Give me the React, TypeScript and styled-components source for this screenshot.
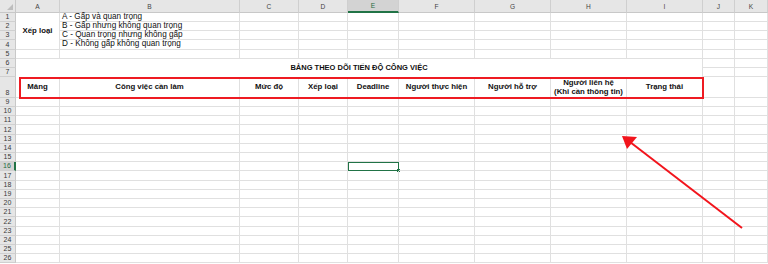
import styled, { createGlobalStyle } from "styled-components";

const GlobalStyle = createGlobalStyle`
  html, body {
    margin: 0;
    padding: 0;
    background: #ffffff;
  }
  body {
    font-family: "Liberation Sans", Arial, sans-serif;
    color: #000;
  }
`;

const COL_WIDTHS = [16, 44, 180, 59, 49, 51, 76, 76, 76, 76, 32, 33];
const LETTERS = ["A", "B", "C", "D", "E", "F", "G", "H", "I", "J", "K"];
const ROW_COUNT = 26;

const LEGEND = [
  "A - Gấp và quan trọng",
  "B - Gấp nhưng không quan trọng",
  "C - Quan trọng nhưng không gấp",
  "D - Không gấp không quan trọng",
];

const HEADERS = [
  "Mảng",
  "Công việc cần làm",
  "Mức độ",
  "Xếp loại",
  "Deadline",
  "Người thực hiện",
  "Người hỗ trợ",
  "Người liên hệ\n(Khi cần thông tin)",
  "Trạng thái",
];

type CellProps = {
  $col: number;
  $row: number;
  $colSpan?: number;
  $rowSpan?: number;
  $bold?: boolean;
  $align?: "left" | "center";
  $selected?: boolean;
};

export default function App() {
  const cells: JSX.Element[] = [];

  for (let r = 1; r <= ROW_COUNT; r++) {
    for (let c = 0; c < LETTERS.length; c++) {
      const key = `${LETTERS[c]}${r}`;
      // merged A1:A4
      if (c === 0 && r >= 2 && r <= 4) continue;
      if (c === 0 && r === 1) {
        cells.push(
          <Cell key={key} $col={c} $row={r} $rowSpan={4} $bold $align="center">
            Xếp loại
          </Cell>
        );
        continue;
      }
      // merged A6:I7 title
      if (r === 7 && c <= 8) continue;
      if (r === 6 && c > 0 && c <= 8) continue;
      if (r === 6 && c === 0) {
        cells.push(
          <Title key={key} $col={0} $row={6} $colSpan={9} $rowSpan={2}>
            BẢNG THEO DÕI TIẾN ĐỘ CÔNG VIỆC
          </Title>
        );
        continue;
      }
      if (r === 8 && c <= 8) {
        cells.push(
          <Cell key={key} $col={c} $row={r} $bold $align="center">
            <HeadText>{HEADERS[c]}</HeadText>
          </Cell>
        );
        continue;
      }
      if (c === 1 && r <= 4) {
        cells.push(
          <Cell key={key} $col={c} $row={r}>
            {LEGEND[r - 1]}
          </Cell>
        );
        continue;
      }
      cells.push(<Cell key={key} $col={c} $row={r} $selected={c === 4 && r === 16} />);
    }
  }

  return (
    <>
      <GlobalStyle />
      <Sheet>
        <Corner />
        {LETTERS.map((l, i) => (
          <ColHead key={l} $col={i} $active={l === "E"}>
            {l}
          </ColHead>
        ))}
        {Array.from({ length: ROW_COUNT }, (_, i) => (
          <RowHead key={i} $row={i + 1} $active={i + 1 === 16}>
            {i + 1}
          </RowHead>
        ))}
        {cells}

        <RedBox />
        <Arrow width="768" height="264" viewBox="0 0 768 264">
          <line x1="742" y1="228" x2="630" y2="142" stroke="#f2141c" strokeWidth="2" />
          <polygon points="622,136 637,137 627,149" fill="#f2141c" />
        </Arrow>
      </Sheet>
    </>
  );
}

const Sheet = styled.div`
  position: relative;
  display: grid;
  grid-template-columns: ${COL_WIDTHS.map((w) => `${w}px`).join(" ")};
  grid-template-rows: 13px repeat(7, 9.14px) 21px repeat(18, 9.2px);
  width: 768px;
  height: 264px;
  overflow: hidden;
  background: #fff;
`;

const Corner = styled.div`
  grid-column: 1;
  grid-row: 1;
  background: #e6e6e6;
  border-right: 1px solid #c8c8c8;
  border-bottom: 1px solid #c8c8c8;
  box-sizing: border-box;
  position: relative;

  &::after {
    content: "";
    position: absolute;
    right: 2px;
    bottom: 2px;
    border-left: 6px solid transparent;
    border-bottom: 6px solid #bdbdbd;
  }
`;

const ColHead = styled.div<{ $col: number; $active?: boolean }>`
  grid-column: ${(p) => p.$col + 2};
  grid-row: 1;
  display: flex;
  align-items: center;
  justify-content: center;
  box-sizing: border-box;
  font-size: 6.6px;
  color: ${(p) => (p.$active ? "#1e6b41" : "#444")};
  background: ${(p) => (p.$active ? "#d3d3d3" : "#e6e6e6")};
  border-right: 1px solid #cfcfcf;
  border-bottom: ${(p) => (p.$active ? "2px solid #217346" : "1px solid #c8c8c8")};
`;

const RowHead = styled.div<{ $row: number; $active?: boolean }>`
  grid-column: 1;
  grid-row: ${(p) => p.$row + 1};
  display: flex;
  align-items: flex-end;
  justify-content: center;
  box-sizing: border-box;
  font-size: 7px;
  line-height: 8px;
  color: ${(p) => (p.$active ? "#1e6b41" : "#3a3a3a")};
  background: ${(p) => (p.$active ? "#d3d3d3" : "#e6e6e6")};
  border-right: ${(p) => (p.$active ? "2px solid #217346" : "1px solid #c8c8c8")};
  border-bottom: 1px solid #d0d0d0;
`;

const Cell = styled.div<CellProps>`
  grid-column: ${(p) => p.$col + 2} / span ${(p) => p.$colSpan ?? 1};
  grid-row: ${(p) => p.$row + 1} / span ${(p) => p.$rowSpan ?? 1};
  position: relative;
  display: flex;
  align-items: center;
  justify-content: ${(p) => (p.$align === "center" ? "center" : "flex-start")};
  box-sizing: border-box;
  padding-left: ${(p) => (p.$align === "center" ? "0" : "2px")};
  font-size: ${(p) => (p.$bold ? "7.8px" : "8.2px")};
  line-height: 1;
  font-weight: ${(p) => (p.$bold ? 700 : 400)};
  color: #111;
  white-space: nowrap;
  border-right: 1px solid #e0e0e0;
  border-bottom: 1px solid #e0e0e0;
  outline: ${(p) => (p.$selected ? "1px solid #217346" : "none")};
  outline-offset: -1px;

  &::after {
    content: "";
    display: ${(p) => (p.$selected ? "block" : "none")};
    position: absolute;
    right: -2px;
    bottom: -2px;
    width: 3px;
    height: 3px;
    background: #217346;
  }
`;

const Title = styled(Cell)`
  font-size: 7.5px;
  font-weight: 700;
  justify-content: center;
  padding-left: 0;
  border-bottom: none;
`;

const HeadText = styled.span`
  text-align: center;
  white-space: pre-line;
  line-height: 9px;
`;

const RedBox = styled.div`
  position: absolute;
  left: 19px;
  top: 77px;
  width: 685px;
  height: 22px;
  box-sizing: border-box;
  border: 2px solid #ee1b22;
  pointer-events: none;
`;

const Arrow = styled.svg`
  position: absolute;
  left: 0;
  top: 0;
  pointer-events: none;
`;
